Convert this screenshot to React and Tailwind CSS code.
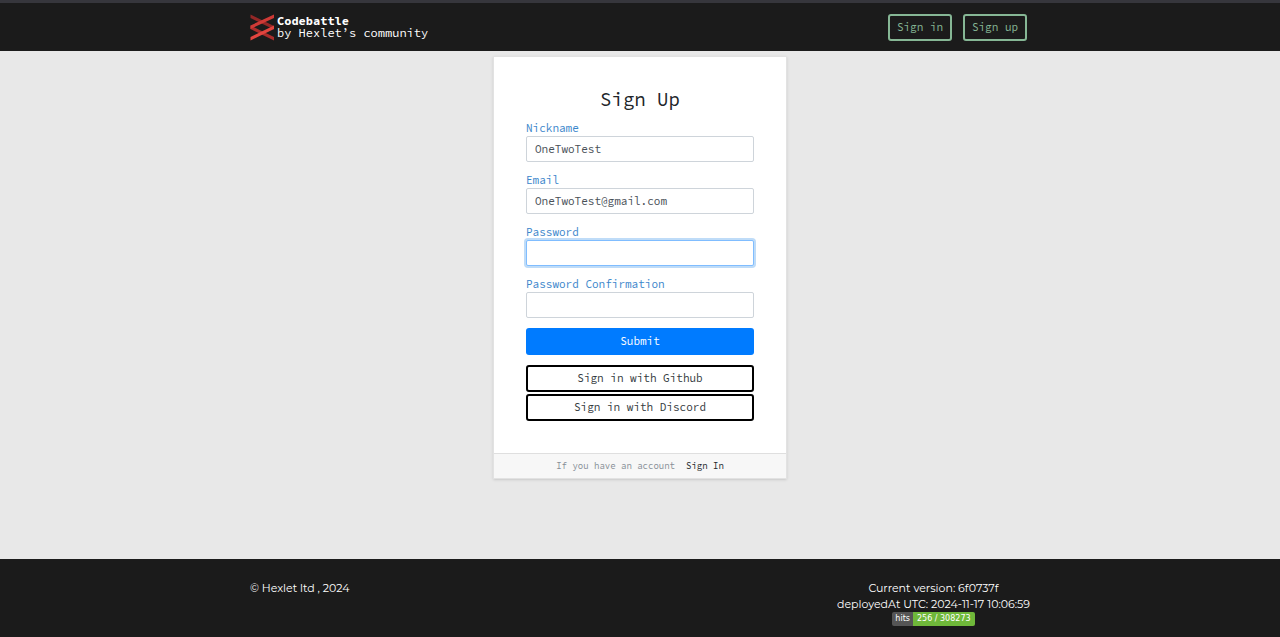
import React from "react";

const fields = [
  { id: "nickname", label: "Nickname", type: "text", value: "OneTwoTest" },
  { id: "email", label: "Email", type: "email", value: "OneTwoTest@gmail.com" },
  { id: "password", label: "Password", type: "password", value: "", active: true },
  { id: "passwordConfirmation", label: "Password Confirmation", type: "password", value: "" },
];

function Logo() {
  return (
    <svg viewBox="0 0 24 28" className="h-7 w-6" aria-hidden="true">
      <path d="M0.500 1.500 24 13v3.500L0.500 5z" fill="#942726" />
      <path d="M0.500 12.500 24 24v3.500L0.500 16z" fill="#a92d2b" />
      <path d="M24 1.500 0.500 12.500v3.500L24 5z" fill="#cf3a36" />
      <path d="M24 12.500 0.500 24v3.500L24 16z" fill="#e2453f" />
    </svg>
  );
}

function Field({ id, label, type, value, active }) {
  return (
    <div className="mb-2.5">
      <label htmlFor={id} className="block h-4 text-[11px] leading-4 text-[#3b86cb]">
        {label}
      </label>
      <input
        id={id}
        name={id}
        type={type}
        defaultValue={value}
        className={
          active
            ? "block h-[26px] w-full rounded-xs border border-[#80bdff] bg-white px-2 text-[11px] text-[#495057] ring-2 ring-[#bfdcf8] outline-none"
            : "block h-[26px] w-full rounded-xs border border-[#ced4da] bg-white px-2 text-[11px] text-[#495057] outline-none"
        }
      />
    </div>
  );
}

export default function App() {
  return (
    <div className="flex min-h-screen flex-col bg-[#e8e8e8] font-['Source_Code_Pro','Liberation_Mono',monospace]">
      <header className="border-t-3 border-[#36363c] bg-[#1b1b1b]">
        <div className="mx-auto flex h-12 max-w-[780px] items-center justify-between pr-[3px]">
          <a href="/" className="flex items-center gap-[3px] text-xs leading-3 text-white">
            <Logo />
            <span>
              <span className="block font-bold">Codebattle</span>
              <span className="block">by Hexlet’s community</span>
            </span>
          </a>
          <nav className="flex gap-[11px] text-[11px] text-[#86b795]">
            <a href="/session/new" className="flex h-[27px] w-16 items-center justify-center rounded-[3px] border-2 border-[#86b795]">
              Sign in
            </a>
            <a href="/users/new" className="flex h-[27px] w-16 items-center justify-center rounded-[3px] border-2 border-[#86b795]">
              Sign up
            </a>
          </nav>
        </div>
      </header>

      <main className="flex-1 pt-[5px]">
        <div className="mx-auto max-w-[294px] border border-[#e2e2e2] bg-white shadow-sm">
          <form className="px-8 pt-7 pb-8">
            <h1 className="mb-[7px] text-center text-[19px] leading-7 text-[#212529]">Sign Up</h1>
            {fields.map((f) => (
              <Field key={f.id} {...f} />
            ))}
            <button type="button" className="mb-2.5 block h-[27px] w-full rounded-[3px] bg-[#007bff] text-[11px] text-white">
              Submit
            </button>
            <div className="flex flex-col gap-0.5 text-[11px] text-[#343a40]">
              <button type="button" className="h-[27px] rounded-[3px] border-2 border-black">
                Sign in with Github
              </button>
              <button type="button" className="h-[27px] rounded-[3px] border-2 border-black">
                Sign in with Discord
              </button>
            </div>
          </form>
          <div className="flex h-[25px] items-center justify-center gap-[11px] border-t border-[#dfdfdf] bg-[#f7f7f7] text-[9px]">
            <span className="text-[#868e96]">If you have an account</span>
            <a href="/session/new" className="text-[#212529]">Sign In</a>
          </div>
        </div>
      </main>

      <footer className="bg-[#1b1b1b] font-['Montserrat','Inter',sans-serif] text-[11px] leading-4 text-white">
        <div className="mx-auto flex max-w-[780px] items-start justify-between pt-[21px] pb-[11px]">
          <p>© Hexlet ltd , 2024</p>
          <div className="flex flex-col items-center">
            <p>Current version: 6f0737f</p>
            <p>deployedAt UTC: 2024-11-17 10:06:59</p>
            <p className="flex h-3.5 overflow-hidden rounded-xs font-['DejaVu_Sans',sans-serif] text-[8px] leading-3.5">
              <span className="bg-[#555555] px-[3px]">hits</span>
              <span className="bg-[#6fb83a] px-1">256 / 308273</span>
            </p>
          </div>
        </div>
      </footer>
    </div>
  );
}
